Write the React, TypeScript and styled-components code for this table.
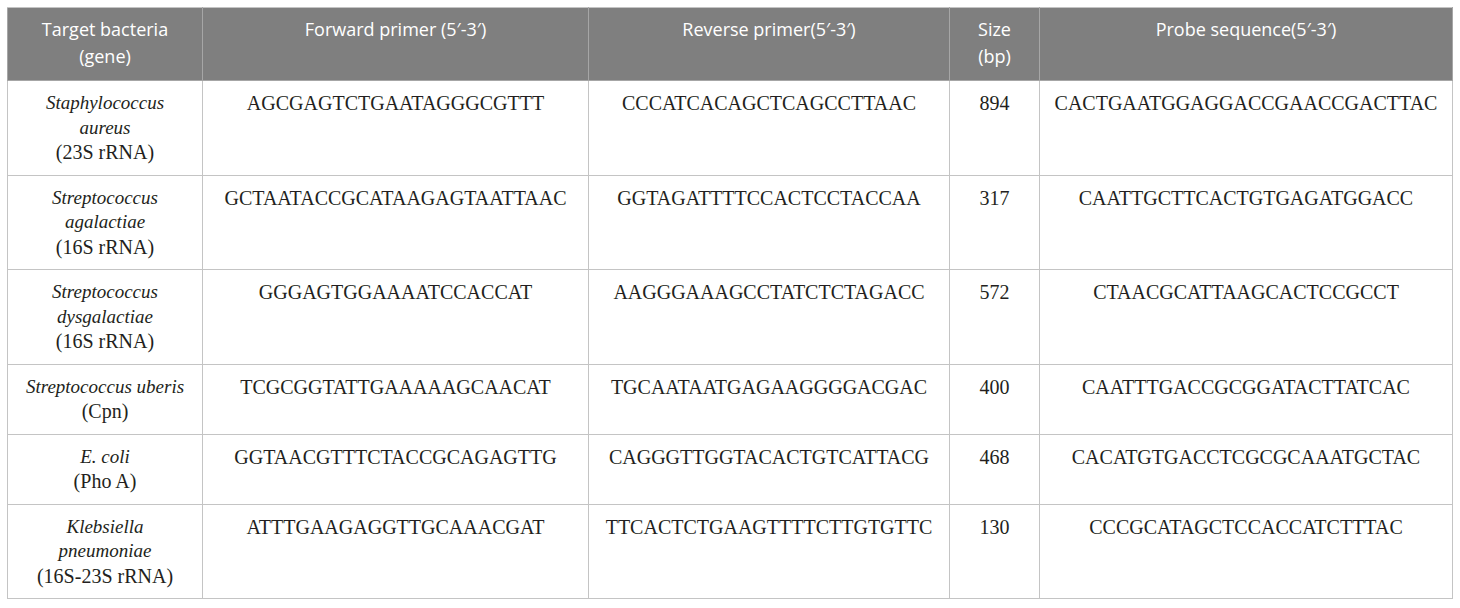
import React from 'react';
import styled, { createGlobalStyle } from 'styled-components';

const GlobalStyle = createGlobalStyle`
  html, body {
    margin: 0;
    padding: 0;
    background: #ffffff;
  }
`;

interface PrimerRow {
  species: string[];
  gene: string;
  forward: string;
  reverse: string;
  size: string;
  probe: string;
}

const rows: PrimerRow[] = [
  {
    species: ['Staphylococcus', 'aureus'],
    gene: '(23S rRNA)',
    forward: 'AGCGAGTCTGAATAGGGCGTTT',
    reverse: 'CCCATCACAGCTCAGCCTTAAC',
    size: '894',
    probe: 'CACTGAATGGAGGACCGAACCGACTTAC',
  },
  {
    species: ['Streptococcus', 'agalactiae'],
    gene: '(16S rRNA)',
    forward: 'GCTAATACCGCATAAGAGTAATTAAC',
    reverse: 'GGTAGATTTTCCACTCCTACCAA',
    size: '317',
    probe: 'CAATTGCTTCACTGTGAGATGGACC',
  },
  {
    species: ['Streptococcus', 'dysgalactiae'],
    gene: '(16S rRNA)',
    forward: 'GGGAGTGGAAAATCCACCAT',
    reverse: 'AAGGGAAAGCCTATCTCTAGACC',
    size: '572',
    probe: 'CTAACGCATTAAGCACTCCGCCT',
  },
  {
    species: ['Streptococcus uberis'],
    gene: '(Cpn)',
    forward: 'TCGCGGTATTGAAAAAGCAACAT',
    reverse: 'TGCAATAATGAGAAGGGGACGAC',
    size: '400',
    probe: 'CAATTTGACCGCGGATACTTATCAC',
  },
  {
    species: ['E. coli'],
    gene: '(Pho A)',
    forward: 'GGTAACGTTTCTACCGCAGAGTTG',
    reverse: 'CAGGGTTGGTACACTGTCATTACG',
    size: '468',
    probe: 'CACATGTGACCTCGCGCAAATGCTAC',
  },
  {
    species: ['Klebsiella', 'pneumoniae'],
    gene: '(16S-23S rRNA)',
    forward: 'ATTTGAAGAGGTTGCAAACGAT',
    reverse: 'TTCACTCTGAAGTTTTCTTGTGTTC',
    size: '130',
    probe: 'CCCGCATAGCTCCACCATCTTTAC',
  },
];

const columnWidths = [195, 386, 361, 90, 413];

const Page = styled.div`
  padding: 7px;
  width: 1446px;
`;

const Table = styled.table`
  width: 1446px;
  table-layout: fixed;
  border-collapse: collapse;
  border: 1px solid #c4c4c4;
`;

const HeadCell = styled.th`
  background: #7f7f7f;
  color: #ffffff;
  font-family: 'Open Sans', 'Noto Sans', sans-serif;
  font-weight: 400;
  font-size: 18px;
  line-height: 27px;
  text-align: center;
  vertical-align: top;
  padding: 8px 8px 10px;
  border: 1px solid #a6a6a6;
  border-top-color: #c4c4c4;
`;

const BodyCell = styled.td`
  font-family: 'Liberation Serif', 'Times New Roman', serif;
  font-size: 20px;
  line-height: 24.5px;
  color: #231f20;
  text-align: center;
  vertical-align: top;
  padding: 10px 8px 10px;
  border: 1px solid #c4c4c4;
`;

const Species = styled.i`
  display: block;
  font-style: italic;
  font-size: 19px;
`;

const Line = styled.span`
  display: block;
`;

export default function App() {
  return (
    <Page>
      <GlobalStyle />
      <Table>
        <colgroup>
          {columnWidths.map((w, i) => (
            <col key={i} style={{ width: w }} />
          ))}
        </colgroup>
        <thead>
          <tr>
            <HeadCell>
              <Line>Target bacteria</Line>
              <Line>(gene)</Line>
            </HeadCell>
            <HeadCell>Forward primer (5′-3′)</HeadCell>
            <HeadCell>Reverse primer(5′-3′)</HeadCell>
            <HeadCell>
              <Line>Size</Line>
              <Line>(bp)</Line>
            </HeadCell>
            <HeadCell>Probe sequence(5′-3′)</HeadCell>
          </tr>
        </thead>
        <tbody>
          {rows.map((row) => (
            <tr key={row.forward}>
              <BodyCell>
                {row.species.map((s) => (
                  <Species key={s}>{s}</Species>
                ))}
                <Line>{row.gene}</Line>
              </BodyCell>
              <BodyCell>{row.forward}</BodyCell>
              <BodyCell>{row.reverse}</BodyCell>
              <BodyCell>{row.size}</BodyCell>
              <BodyCell>{row.probe}</BodyCell>
            </tr>
          ))}
        </tbody>
      </Table>
    </Page>
  );
}
